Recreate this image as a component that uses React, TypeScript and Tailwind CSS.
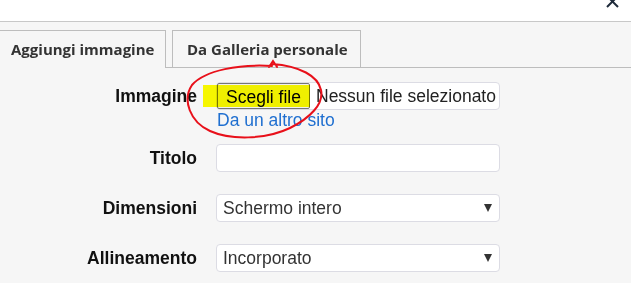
const labelCls =
  "w-[197px] shrink-0 text-right text-[17.5px] font-bold text-[#111] font-['Liberation_Sans',Arial,sans-serif]";

function SelectBox({ value }: { value: string }) {
  return (
    <div className="relative w-[284px] h-[28px] rounded-[4px] border border-[#dcdce4] bg-white flex items-center pl-[6px]">
      <span className="text-[17.5px] text-[#333] font-['Liberation_Sans',Arial,sans-serif]">{value}</span>
      <svg className="absolute right-[7px] top-[9px]" width="8" height="8" viewBox="0 0 8 8">
        <path d="M0 0 L8 0 L4 8 Z" fill="#333" />
      </svg>
    </div>
  );
}

function Row({ label, children, className = "" }: { label: string; children: React.ReactNode; className?: string }) {
  return (
    <div className={`flex items-center gap-[19px] ${className}`}>
      <div className={labelCls}>{label}</div>
      {children}
    </div>
  );
}

export default function App() {
  return (
    <div className="relative w-[631px] h-[283px] overflow-hidden bg-[#f6f6f6] font-['Liberation_Sans',Arial,sans-serif]">
      {/* Top bar with close */}
      <div className="h-[22px] bg-white border-b border-[#c8c8c8] relative">
        <svg className="absolute left-[605px] top-[-6px]" width="15" height="15" viewBox="0 0 15 15">
          <path d="M2 2 L13 13 M13 2 L2 13" stroke="#1e2a3a" strokeWidth="2" />
        </svg>
      </div>

      {/* Tabs */}
      <div className="flex items-end pt-[8px] border-b border-[#bdbdbd] h-[46px]">
        <div className="h-[38px] w-[166px] -mb-px border-t border-r border-[#bdbdbd] bg-[#f6f6f6] flex items-center pl-[11px] text-[15px] font-bold text-[#333] font-['Open_Sans',sans-serif]">
          Aggiungi immagine
        </div>
        <div className="ml-[6px] h-[37px] w-[189px] border border-b-0 border-[#bdbdbd] bg-[#f6f6f6] flex items-center pl-[14px] text-[15px] font-bold text-[#333] font-['Open_Sans',sans-serif]">
          Da Galleria personale
        </div>
      </div>

      {/* Form */}
      <div className="flex flex-col pt-[14px]">
        <Row label="Immagine">
          <div className="w-[284px] h-[28px] rounded-[4px] border border-[#dcdce4] bg-white flex items-center">
            <button className="h-[26px] w-[93px] rounded-[2px] border border-[#767676] bg-[#efefef] text-[17.5px] text-black font-['Liberation_Sans',Arial,sans-serif]">
              Scegli file
            </button>
            <span className="ml-[6px] text-[17.5px] text-[#222] whitespace-nowrap">Nessun file selezionato</span>
          </div>
        </Row>
        <div className="pl-[217px] h-[20px] text-[17.5px] leading-[20px] text-[#1f6fd0]">Da un altro sito</div>
        <Row label="Titolo" className="mt-[14px]">
          <div className="w-[284px] h-[28px] rounded-[4px] border border-[#dcdce4] bg-white" />
        </Row>
        <Row label="Dimensioni" className="mt-[22px]">
          <SelectBox value="Schermo intero" />
        </Row>
        <Row label="Allineamento" className="mt-[22px]">
          <SelectBox value="Incorporato" />
        </Row>
      </div>

      {/* Highlighter mark */}
      <div className="absolute left-[203px] top-[85px] w-[107px] h-[22px] bg-[#ffff00] mix-blend-multiply" />

      {/* Red hand-drawn circle */}
      <svg className="absolute left-0 top-0 pointer-events-none" width="631" height="283" viewBox="0 0 631 283">
        <path
          d="M272 66 C240 64 205 70 192 85 C182 100 190 122 210 131 C230 140 265 140 290 128 C310 118 324 104 321 90 C318 76 300 66 272 64 M269 67 L273 61 L277 67"
          fill="none"
          stroke="#e8101a"
          strokeWidth="2"
          strokeLinecap="round"
        />
      </svg>
    </div>
  );
}
